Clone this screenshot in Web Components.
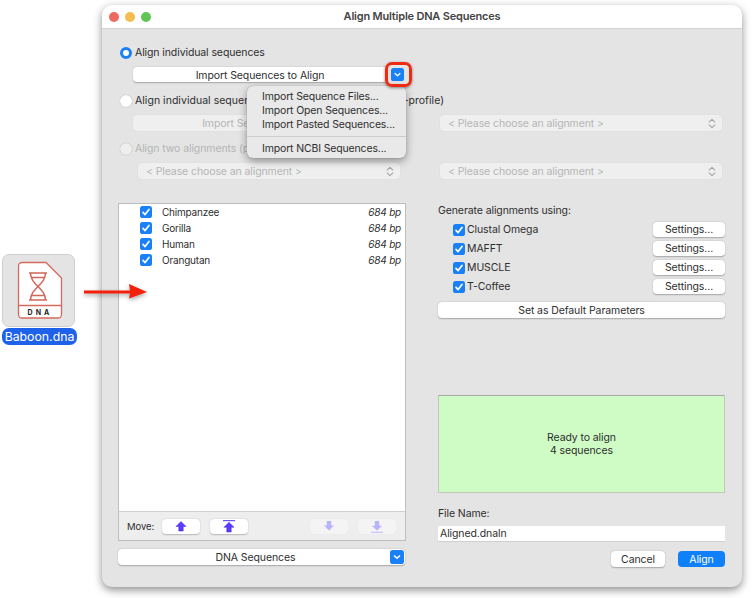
<!DOCTYPE html>
<html><head><meta charset="utf-8">
<style>
html,body{margin:0;padding:0;background:#fff}
body{font:10.500px Inter,"Liberation Sans",sans-serif;letter-spacing:-.1px;color:#2e2e2e;width:753px;height:598px;overflow:hidden}
</style></head><body>
<app-desktop>
  <file-icon slot="side">Baboon.dna</file-icon>
  <mac-window title="Align Multiple DNA Sequences">
    <mac-radio checked>Align individual sequences</mac-radio>
    <div style="display:flex;align-items:center;gap:4px;margin:8px 0 0 15px;width:271px">
      <mac-button style="flex:1;height:15px;padding-top:1px">Import Sequences to Align</mac-button>
      <blue-drop></blue-drop>
    </div>
    <mac-radio style="margin-top:12px;letter-spacing:.03px">Align individual sequences to an alignment (sequence-profile)</mac-radio>
    <div style="display:flex;gap:40px;margin:8px 0 0 15px;width:589px">
      <mac-button disabled style="width:267px;height:16px">Import Sequences to Align</mac-button>
      <mac-popup disabled style="width:282px">&lt; Please choose an alignment &gt;</mac-popup>
    </div>
    <mac-radio disabled style="margin-top:11px">Align two alignments (profile-profile)</mac-radio>
    <div style="display:flex;gap:40px;margin:8px 0 0 20px;width:584px">
      <mac-popup disabled style="width:262px">&lt; Please choose an alignment &gt;</mac-popup>
      <mac-popup disabled style="width:282px">&lt; Please choose an alignment &gt;</mac-popup>
    </div>
    <div style="display:grid;grid-template-columns:288px 287px;column-gap:32px;margin-top:24px">
      <seq-panel>
        <seq-row>Chimpanzee</seq-row><seq-row>Gorilla</seq-row><seq-row>Human</seq-row><seq-row>Orangutan</seq-row>
      </seq-panel>
      <div style="display:flex;flex-direction:column">
        <div style="margin-top:1px;height:13px;line-height:13px">Generate alignments using:</div>
        <div style="display:flex;flex-direction:column;gap:4px;margin:5px 0 0 15px">
          <tool-row>Clustal Omega</tool-row><tool-row>MAFFT</tool-row><tool-row>MUSCLE</tool-row><tool-row>T-Coffee</tool-row>
        </div>
        <mac-button style="height:16px;margin-top:8px">Set as Default Parameters</mac-button>
        <status-box style="margin-top:77px">Ready to align<br>4 sequences</status-box>
        <div style="margin-top:14px;height:13px;line-height:13px">File Name:</div>
        <file-field style="margin-top:6px">Aligned.dnaln</file-field>
        <div style="display:flex;justify-content:flex-end;gap:13px;margin-top:9px">
          <mac-button style="width:54px;height:16px">Cancel</mac-button>
          <mac-button primary style="width:47px;height:16px">Align</mac-button>
        </div>
      </div>
    </div>
  </mac-window>
</app-desktop>
<script>
const def=(name,html,init)=>customElements.define(name,class extends HTMLElement{
  connectedCallback(){ if(this.shadowRoot)return; const r=this.attachShadow({mode:'open'}); r.innerHTML=html; init&&init.call(this,r); }
});
const CHK=`<svg viewBox="0 0 12 12" width="12" height="12" style="display:block;flex:none"><rect width="12" height="12" rx="2.600" fill="#1a80f8"/><path d="M3 6.400l2.100 2.200L9 3.500" fill="none" stroke="#fff" stroke-width="1.700" stroke-linecap="round" stroke-linejoin="round"/></svg>`;
const CHEV=s=>`<svg viewBox="0 0 15 15" width="${s}" height="${s}" style="display:block;flex:none"><rect width="15" height="15" rx="3" fill="#1a80f8"/><path d="M4.700 6.300l2.800 2.600 2.800-2.600" fill="none" stroke="#fff" stroke-width="1.500" stroke-linecap="round" stroke-linejoin="round"/></svg>`;

def('app-desktop',`<style>
:host{display:flex;align-items:flex-start;position:relative;width:753px;height:598px}
.side{width:102px;flex:none;padding:254px 0 0 2px;box-sizing:border-box}
.arrow{position:absolute;left:82px;top:280px;z-index:5;filter:drop-shadow(0 2px 2px rgba(0,0,0,.35))}
</style><div class="side"><slot name="side"></slot></div><slot></slot>
<svg class="arrow" width="68" height="24" viewBox="0 0 68 24"><path d="M2 10.500L48 10.500 47 4 65 12 47 18.500 48 13.500 2 13.500Z" fill="#f3200c"/></svg>`);

def('file-icon',`<style>
:host{display:block;width:75px;letter-spacing:0}
.tile{width:73px;height:73px;box-sizing:border-box;background:#e4e4e4;border:1px solid #cfcfcf;border-radius:7px}
.tile svg{display:block}
.lab{margin-top:1px;height:17px;line-height:17px;text-align:center;background:#1f62ea;color:#fff;border-radius:7px;font-size:12.300px;white-space:nowrap}
</style><div class="tile"><svg width="71" height="71" viewBox="1 1 71 71">
<path d="M20 8.500H44L59.500 24V60.500A3.500 3.500 0 0 1 56 64H20A3.500 3.500 0 0 1 16.500 60.500V12A3.500 3.500 0 0 1 20 8.500Z" fill="#fff" stroke="#d4695c" stroke-width="1.300"/>
<path d="M16.500 51.500H59.500" stroke="#d4695c" stroke-width="1.300"/>
<path d="M27 19H45M27 46H45M28.500 19C28.500 31 43.500 34 43.500 46M43.500 19C43.500 31 28.500 34 28.500 46M29.500 23.500H42.500M29.500 41.500H42.500" fill="none" stroke="#d0685a" stroke-width="1.500"/>
<text x="38" y="61" text-anchor="middle" font-family="Inter,Liberation Sans,sans-serif" font-size="7" font-weight="700" letter-spacing="3.100" fill="#222">DNA</text>
</svg></div><div class="lab"><slot></slot></div>`);

def('mac-window',`<style>
:host{display:block;width:640px;height:582px;margin-top:5px;background:#e4e4e4;border-radius:10px;box-shadow:0 3px 9px rgba(0,0,0,.45);position:relative}
.bar{height:23px;background:#fff;border-radius:10px 10px 0 0;border-bottom:1px solid #d2d2d2;display:flex;align-items:center;position:relative}
.dots{display:flex;gap:6px;padding-left:7px}
.dots i{width:10px;height:10px;border-radius:50%}
.t{position:absolute;left:0;right:0;text-align:center;font-weight:600;color:#444;font-size:11px;letter-spacing:-.2px;top:5px;line-height:13px}
.c{padding:17px 17px 0 16px}
.ring{position:absolute;left:283px;top:57px;width:27px;height:25px;box-sizing:border-box;border:3px solid #ee2a10;border-radius:7px;box-shadow:0 1px 3px rgba(0,0,0,.45);z-index:4}
</style><div class="bar"><div class="dots"><i style="background:#ee6a5e"></i><i style="background:#f5bd4f"></i><i style="background:#61c454"></i></div><div class="t" id="t"></div></div>
<div class="c"><slot></slot></div>
<drop-menu></drop-menu><div class="ring"></div>`,function(r){r.getElementById('t').textContent=this.getAttribute('title')});

def('drop-menu',`<style>
:host{display:block;position:absolute;left:145px;top:81px;width:159px;height:72px;background:#e9e9e9;border-radius:6px;box-shadow:0 3px 9px rgba(0,0,0,.38),0 0 1px rgba(0,0,0,.3);box-sizing:border-box;padding:4px 0 0 15px;line-height:14px;letter-spacing:-.15px;white-space:nowrap;z-index:3}
hr{border:0;border-top:1px solid #cdcdcd;margin:4px 0 5px -15px}
</style><div>Import Sequence Files...</div><div>Import Open Sequences...</div><div>Import Pasted Sequences...</div><hr><div>Import NCBI Sequences...</div>`);

def('mac-radio',`<style>
:host{display:flex;align-items:center;gap:3px;height:13px;line-height:13px;white-space:nowrap;padding-left:2px}
i{width:12px;height:12px;border-radius:50%;background:#fff;box-shadow:0 0 1px rgba(0,0,0,.35);flex:none;box-sizing:border-box}
:host([checked]) i{border:3.500px solid #1a80f8;box-shadow:none}
:host([disabled]){color:#b5b5b5}
:host([disabled]) i{background:#efefef}
</style><i></i><span><slot></slot></span>`);

def('mac-button',`<style>
:host{display:flex;align-items:center;justify-content:center;background:#fff;border-radius:4px;box-shadow:0 .5px 1.500px rgba(0,0,0,.28);white-space:nowrap;overflow:hidden;box-sizing:border-box}
:host([disabled]){background:#efefef;color:#b5b5b5;box-shadow:0 0 1px rgba(0,0,0,.12)}
:host([primary]){background:#0f7ffa;color:#fff;box-shadow:none}
</style><slot></slot>`);

def('blue-drop',`<style>:host{display:block;width:13px;height:13px;flex:none}</style>${CHEV(13)}`);

def('mac-popup',`<style>
:host{display:flex;align-items:center;height:16px;padding:0 6px 0 8px;box-sizing:border-box;background:#efefef;border-radius:4px;color:#b5b5b5;justify-content:space-between;white-space:nowrap;box-shadow:0 0 1px rgba(0,0,0,.12)}
svg{display:block}
</style><slot></slot><svg width="8" height="11" viewBox="0 0 8 11"><path d="M1.200 4L4 1.300 6.800 4M1.200 7L4 9.700 6.800 7" fill="none" stroke="#a8a8a8" stroke-width="1.100" stroke-linecap="round" stroke-linejoin="round"/></svg>`);

def('seq-panel',`<style>
:host{display:block}
.box{height:338px;box-sizing:border-box;border:1px solid #bdbdbd;background:#fff;display:flex;flex-direction:column}
.l{flex:1}
.f{height:29px;box-sizing:border-box;background:#eeeeee;border-top:1px solid #cfcfcf;display:flex;align-items:center;padding-left:8px;font-size:9.500px}
.f span{width:35px}
.m{width:38px;height:15px;background:#fff;border-radius:4px;box-shadow:0 .5px 1.500px rgba(0,0,0,.25);display:flex;align-items:center;justify-content:center}
.m.d{background:#f4f4f4;box-shadow:0 0 1px rgba(0,0,0,.1)}
.sel{margin-top:8px;height:16px;width:287px;background:#fff;border-radius:4px;box-shadow:0 .5px 1.500px rgba(0,0,0,.28);display:flex;align-items:center;padding-right:0}
.sel div{flex:1;text-align:center;padding-left:3px}
</style><div class="box"><div class="l"><slot></slot></div><div class="f"><span>Move:</span>
<div class="m"><svg width="12" height="12" viewBox="0 0 12 12"><path d="M6 1.500L11 6.500H8.200V11H3.800V6.500H1Z" fill="#5a3cff" stroke="#3a22d8" stroke-width=".5"/></svg></div>
<div class="m" style="margin-left:10px"><svg width="12" height="13" viewBox="0 0 12 13"><path d="M0 .7H12" stroke="#4a30f0" stroke-width="1"/><path d="M6 2.300L11 7.300H8.200V12H3.800V7.300H1Z" fill="#5a3cff" stroke="#3a22d8" stroke-width=".5"/></svg></div>
<div class="m d" style="margin-left:62px"><svg width="12" height="12" viewBox="0 0 12 12"><path d="M6 10.500L11 5.500H8.200V1H3.800V5.500H1Z" fill="#b9b3fb"/></svg></div>
<div class="m d" style="margin-left:10px"><svg width="12" height="13" viewBox="0 0 12 13"><path d="M0 12.300H12" stroke="#c0baf9" stroke-width="1"/><path d="M6 10.700L11 5.700H8.200V1H3.800V5.700H1Z" fill="#b9b3fb"/></svg></div>
</div></div><div class="sel"><div>DNA Sequences</div><span style="margin-right:1px">${CHEV(14)}</span></div>`);

def('seq-row',`<style>
:host{display:flex;align-items:center;height:16px;padding:0 4px 0 21px;white-space:nowrap;font-size:10px;letter-spacing:-.2px}
.n{margin-left:10px;flex:1}
em{font-style:italic}
</style>${CHK}<span class="n"><slot></slot></span><em>684 bp</em>`);

def('tool-row',`<style>
:host{display:flex;align-items:center;height:15px;white-space:nowrap;gap:2px}
.n{flex:1}
</style>${CHK}<span class="n"><slot></slot></span><mac-button style="width:72px;height:15px">Settings...</mac-button>`);

def('status-box',`<style>
:host{display:flex;align-items:center;justify-content:center;text-align:center;height:98px;box-sizing:border-box;background:#cffcc5;border:1px solid #c0c8bc;border-top-color:#a9a9a9;line-height:13px}
</style><div><slot></slot></div>`);

def('file-field',`<style>
:host{display:flex;align-items:center;height:16px;background:#fff;padding-left:2px;box-sizing:border-box;border-bottom:1px solid #d0d0d0}
</style><slot></slot>`);
</script>
</body></html>
